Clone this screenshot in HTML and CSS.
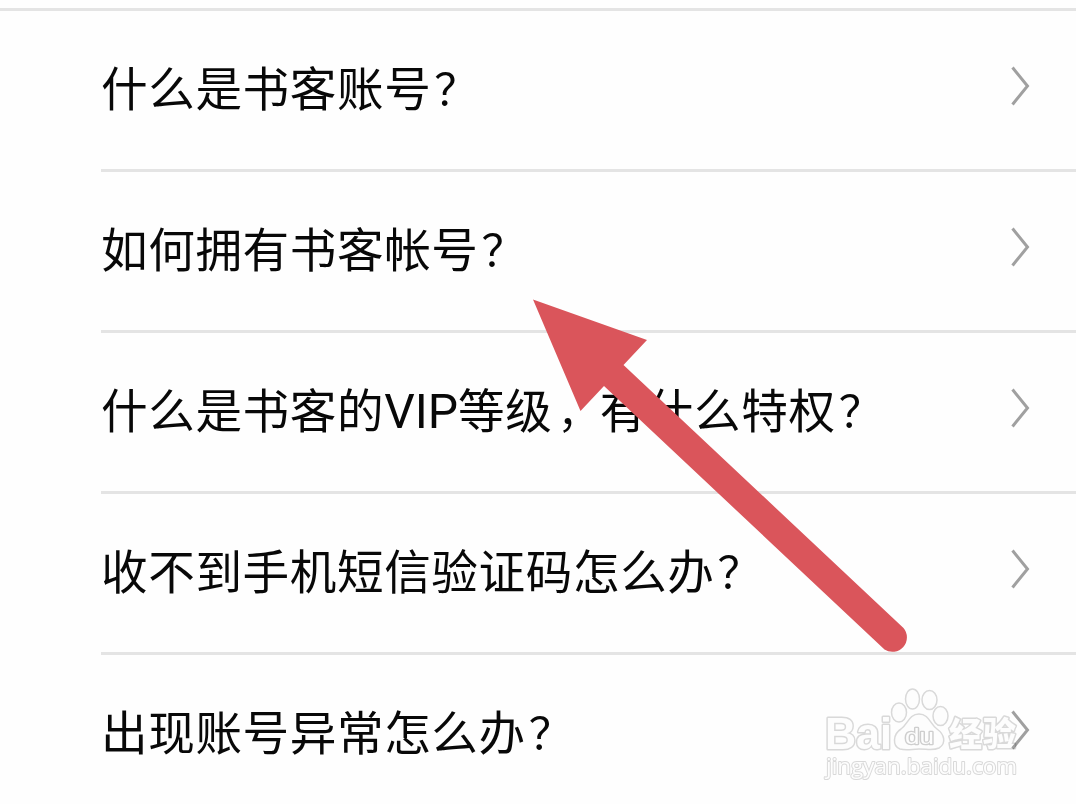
FILE: index.html
```html
<!DOCTYPE html>
<html lang="zh-CN">
<head>
<meta charset="utf-8">
<title>帮助</title>
<link rel="stylesheet" href="styles.css">
</head>
<body>
<main class="page">
  <ul class="list">
    <li class="row"><span class="label">什么是书客账号<span class="mark">？</span></span><svg class="chevron" viewBox="0 0 20 40"><path d="M2.500 1.500L17.500 20L2.500 38.500"/></svg></li>
    <li class="row"><span class="label">如何拥有书客帐号<span class="mark">？</span></span><svg class="chevron" viewBox="0 0 20 40"><path d="M2.500 1.500L17.500 20L2.500 38.500"/></svg></li>
    <li class="row"><span class="label">什么是书客的<span class="latin">VIP</span>等级<span class="comma">，</span>有什么特权<span class="mark">？</span></span><svg class="chevron" viewBox="0 0 20 40"><path d="M2.500 1.500L17.500 20L2.500 38.500"/></svg></li>
    <li class="row"><span class="label">收不到手机短信验证码怎么办<span class="mark">？</span></span><svg class="chevron" viewBox="0 0 20 40"><path d="M2.500 1.500L17.500 20L2.500 38.500"/></svg></li>
    <li class="row"><span class="label">出现账号异常怎么办<span class="mark">？</span></span><svg class="chevron" viewBox="0 0 20 40"><path d="M2.500 1.500L17.500 20L2.500 38.500"/></svg></li>
  </ul>
  <svg class="arrow" viewBox="0 0 1076 804"><path d="M533 299.500L647 340L623.500 365L903.500 628A14.500 14.500 0 0 1 884.500 649.500L604 386L580.500 411Z"/></svg>
  <svg class="watermark" viewBox="0 0 266 124">
    <g class="logo">
      <text x="15" y="68.500" font-size="44" textLength="67" lengthAdjust="spacingAndGlyphs">Bai</text>
      <ellipse cx="89" cy="32.500" rx="7.500" ry="9.500"/><ellipse cx="102.500" cy="19" rx="7" ry="10"/><ellipse cx="119.500" cy="20" rx="7.500" ry="9.500"/><ellipse cx="130.500" cy="36" rx="7.500" ry="9.500"/>
      <path d="M109 34C99 34 98 44 91 49C83 54 82 66 90 69C97 71 102 69 109 69C117 69 123 71 129 68C137 63 134 54 127 49C120 44 119 34 109 34Z"/>
      <text class="du" x="95" y="64" font-size="22" textLength="29" lengthAdjust="spacingAndGlyphs">du</text>
      <text class="cn" x="139" y="66" font-size="33" textLength="67">经验</text>
      <text class="url" x="16" y="94" font-size="22.500" textLength="191" lengthAdjust="spacingAndGlyphs">jingyan.baidu.com</text>
    </g>
  </svg>
</main>
</body>
</html>
```
FILE: styles.css
```css
* { box-sizing: border-box; }
body { margin: 0; background: #fefefe; }
.page { position: relative; width: 1076px; height: 804px; overflow: hidden; padding-top: 8px; }
.list { list-style: none; margin: 0; padding: 0 0 0 101px; border-top: 3px solid #e4e4e4; }
.row { display: flex; align-items: flex-start; justify-content: space-between; height: 161px; padding: 40px 46px 0 0; border-bottom: 3px solid #e4e4e4; }
.row:last-child { border-bottom: 0; }
.label { height: 70px; font: 400 46.600px/70px "Noto Sans CJK SC", sans-serif; letter-spacing: 0.600px; color: #080808; white-space: nowrap; }
.latin { font-family: Roboto, sans-serif; font-size: 48px; line-height: 1; letter-spacing: 0; }
.mark { font-size: 44px; line-height: 1; margin-left: 3px; }
.comma { font-size: 42px; line-height: 1; padding-left: 5px; letter-spacing: 0.200px; }
.chevron { width: 20px; height: 40px; margin-top: 15px; }
.chevron path { fill: none; stroke: #a0a0a0; stroke-width: 3; }
.arrow { position: absolute; left: 0; top: 0; width: 1076px; height: 804px; fill: #da555b; }
.watermark { position: absolute; left: 810px; top: 680px; width: 266px; height: 124px; mix-blend-mode: multiply; }
.logo { fill: #fefefe; stroke: #dadada; stroke-width: 1.500; font-family: "Liberation Sans", sans-serif; font-weight: 700; }
.logo text { paint-order: stroke; stroke-width: 3; stroke-linejoin: round; }
.logo .du { stroke-width: 2.500; stroke: #cfcfcf; font-weight: 400; }
.logo .cn { font-family: "Noto Sans CJK SC", sans-serif; font-weight: 900; }
.logo .url { font-family: "Open Sans", sans-serif; font-weight: 400; stroke-width: 2; }
```
